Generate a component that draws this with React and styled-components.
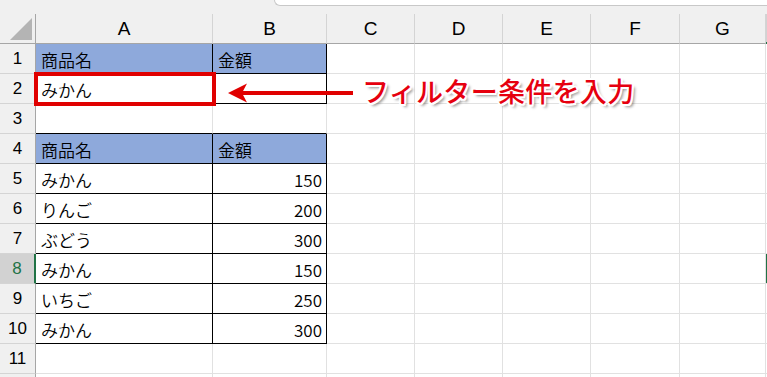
import React from 'react';
import styled, { createGlobalStyle, css } from 'styled-components';

const GlobalStyle = createGlobalStyle`
  html, body {
    margin: 0;
    padding: 0;
    background: #fff;
    overflow: hidden;
  }
  body {
    font-family: "Noto Sans CJK JP", "Noto Sans", sans-serif;
    color: #000;
  }
`;

const COLUMNS = ['A', 'B', 'C', 'D', 'E', 'F', 'G', 'H'];
const WIDTHS = [177, 114, 88, 88, 88, 89, 86, 88];

// the last column and row only peek in at the window edge, so they carry no label
const HIDDEN_COLUMN = 'H';

const ROWS = [
    { n: 1, a: '商品名', b: '金額', head: true },
    { n: 2, a: 'みかん', b: '' },
    { n: 3, above: true },
    { n: 4, a: '商品名', b: '金額', head: true },
    { n: 5, a: 'みかん', b: 150 },
    { n: 6, a: 'りんご', b: 200 },
    { n: 7, a: 'ぶどう', b: 300 },
    { n: 8, a: 'みかん', b: 150 },
    { n: 9, a: 'いちご', b: 250 },
    { n: 10, a: 'みかん', b: 300 },
    { n: 11 },
    { n: 12, clipped: true },
];

const ACTIVE_ROW = 8;

const Sheet = styled.div`
    position: relative;
    width: 767px;
    height: 377px;
    overflow: hidden;
    background: #fff;
`;

const TopStrip = styled.div`
    height: 14px;
    background: #f0f0f0;
    display: flex;
    justify-content: flex-end;
`;

const FormulaEdge = styled.div`
    width: 492px;
    height: 5px;
    background: #fff;
    border-left: 1px solid #c8c8c8;
    border-bottom: 1px solid #c8c8c8;
    border-bottom-left-radius: 6px;
`;

const Grid = styled.div`
    display: grid;
    grid-template-columns: 36px ${WIDTHS.map(w => `${w}px`).join(' ')};
    grid-auto-rows: 30px;
`;

const headerBase = css`
    box-sizing: border-box;
    background: #f0f0f0;
    display: flex;
    align-items: center;
    justify-content: center;
    font-size: 17px;
    line-height: 1;
`;

const Corner = styled.div`
    ${headerBase};
    border-right: 1px solid #a6a6a6;
    border-bottom: 1px solid #a6a6a6;
    align-items: flex-end;
    justify-content: flex-end;
    padding: 0 3px 3px 0;
`;

const ColHead = styled.div`
    ${headerBase};
    font-family: "Liberation Sans", Arial, sans-serif;
    font-size: 19px;
    border-right: 1px solid #d4d4d4;
    border-bottom: 1px solid ${p => (p.$active ? '#217346' : '#a6a6a6')};
    ${p => p.$active && css`
        border-bottom-width: 2px;
        background: #d2d2d2;
    `}
`;

const RowHead = styled.div`
    ${headerBase};
    font-family: "Liberation Sans", Arial, sans-serif;
    border-right: 1px solid #a6a6a6;
    border-bottom: 1px solid #d4d4d4;
    ${p => p.$active && css`
        background: #d2d2d2;
        color: #217346;
        border-right: 2px solid #217346;
    `}
`;

const Cell = styled.div`
    box-sizing: border-box;
    display: flex;
    align-items: center;
    justify-content: ${p => (p.$num ? 'flex-end' : 'flex-start')};
    padding: 1px 4px 0 5px;
    font-size: 17px;
    font-weight: 350;
    line-height: 1;
    white-space: nowrap;
    border-right: 1px solid ${p => (p.$boxRight ? '#000' : '#e1e1e1')};
    border-bottom: 1px solid ${p => (p.$boxBottom ? '#000' : '#e1e1e1')};
    background: ${p => (p.$fill ? '#8ea9db' : '#fff')};
    ${p => p.$current && css`
        box-shadow: inset 2px 2px 0 #217346, inset -2px -2px 0 #217346;
    `}
`;

const Overlay = styled.div`
    position: absolute;
    inset: 0;
    pointer-events: none;
`;

const RedBox = styled.div`
    position: absolute;
    left: 34px;
    top: 72px;
    width: 182px;
    height: 34px;
    box-sizing: border-box;
    border: 4px solid #e00000;
`;

const Arrow = styled.svg`
    position: absolute;
    left: 226px;
    top: 82px;
`;

const Callout = styled.div`
    position: absolute;
    left: 362px;
    top: 77px;
    font-size: 27px;
    line-height: 28px;
    font-weight: 500;
    letter-spacing: 0.3px;
    color: #e6000f;
    white-space: nowrap;
    text-shadow:
        -2px 0 #fff, 2px 0 #fff, 0 -2px #fff, 0 2px #fff,
        -1.5px -1.5px #fff, 1.5px 1.5px #fff, -1.5px 1.5px #fff, 1.5px -1.5px #fff,
        3px 3px 3px rgba(0, 0, 0, 0.45);
`;

const CornerMark = () => (
    <svg width="22" height="22" viewBox="0 0 22 22">
        <polygon points="22,0 22,22 0,22" fill="#b4b4b4" />
    </svg>
);

const LeftArrow = () => (
    <Arrow width="132" height="22" viewBox="0 0 132 22">
        <line x1="14" y1="11" x2="127" y2="11" stroke="#e00000" strokeWidth="4" />
        <polygon points="2,11 21,1.5 16,11 21,20.5" fill="#e00000" />
    </Arrow>
);

const SheetRow = ({ row }) => {
    const inTable = row.a !== undefined;
    const active = row.n === ACTIVE_ROW;
    const edge = inTable || row.above;
    return (
        <>
            <RowHead $active={active}>{row.clipped ? '' : row.n}</RowHead>
            <Cell $fill={row.head} $boxRight={inTable} $boxBottom={edge}>
                {row.a}
            </Cell>
            <Cell
                $num={typeof row.b === 'number'}
                $fill={row.head}
                $boxRight={inTable}
                $boxBottom={edge}
            >
                {row.b}
            </Cell>
            {COLUMNS.slice(2).map(col => (
                <Cell key={col} $current={active && col === HIDDEN_COLUMN} />
            ))}
        </>
    );
};

const App = () => (
    <Sheet>
        <GlobalStyle />
        <TopStrip>
            <FormulaEdge />
        </TopStrip>
        <Grid>
            <Corner>
                <CornerMark />
            </Corner>
            {COLUMNS.map(col => (
                <ColHead key={col} $active={col === HIDDEN_COLUMN}>
                    {col === HIDDEN_COLUMN ? '' : col}
                </ColHead>
            ))}
            {ROWS.map(row => (
                <SheetRow key={row.n} row={row} />
            ))}
        </Grid>
        <Overlay>
            <RedBox />
            <LeftArrow />
            <Callout>フィルター条件を入力</Callout>
        </Overlay>
    </Sheet>
);

export default App;
